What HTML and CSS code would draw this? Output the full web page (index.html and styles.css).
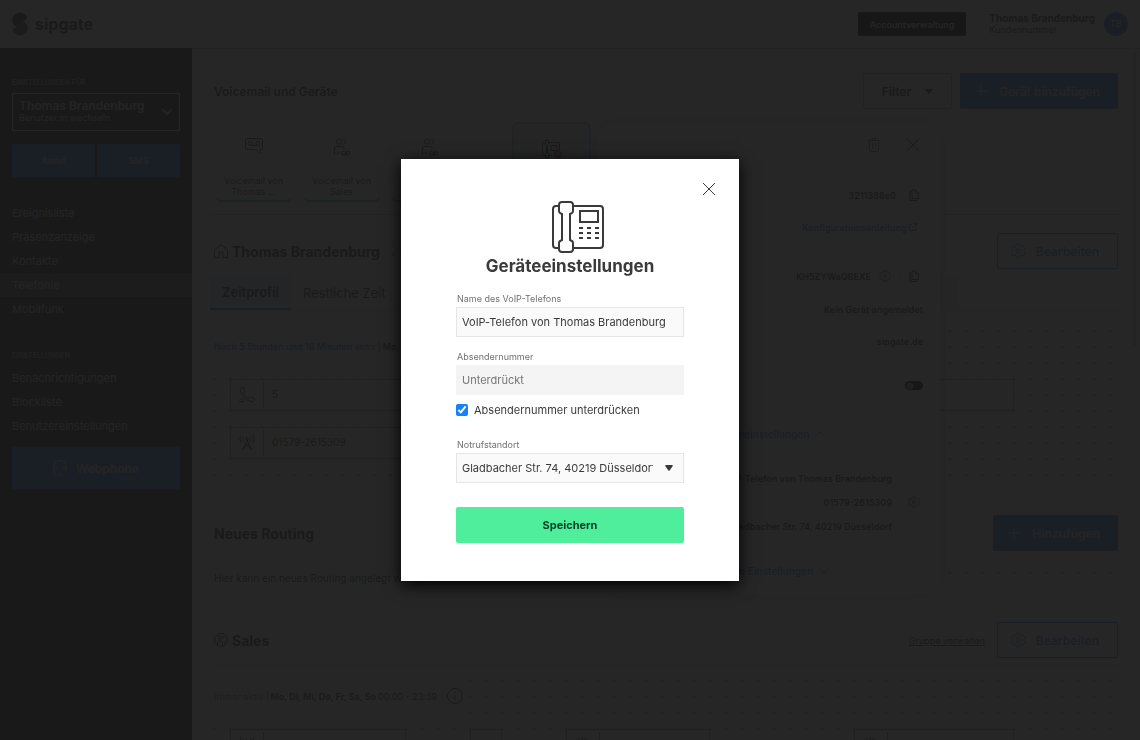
FILE: index.html
```
<!DOCTYPE html>
<html lang="de">
  <head>
    <title>Telefonie</title>
    <meta charset="utf-8" />
    <meta name="viewport" content="width=device-width, initial-scale=1" />
    <link rel="stylesheet" href="styles.css">
  </head>
  <body>
    <svg class="sprite" width="0" height="0" aria-hidden="true">
      <symbol id="gear" viewBox="0 0 16 16"><path d="M6.5 1h3l.5 2 1.5.9 2-.6 1.5 2.6L13.600 7.300v1.400L15 10.100l-1.500 2.600-2-.6L10 13l-.5 2h-3L6 13l-1.500-.9-2 .6L1 10.100l1.400-1.400V7.300L1 5.900l1.500-2.600 2 .6L6 3z"/><circle cx="8" cy="8" r="2"/></symbol>
      <symbol id="copy" viewBox="0 0 12 12"><path d="M2 2.500v9h7v-2M2 2.500h1M4 1h3.500L10.500 4v5.500H4zM7.500 1v3h3"/></symbol>
      <symbol id="cross" viewBox="0 0 12 12"><path d="M0 0l12 12M12 0L0 12"/></symbol>
      <symbol id="plus" viewBox="0 0 12 12"><path d="M6 0v12M0 6h12"/></symbol>
      <symbol id="people" viewBox="0 0 16 18"><circle cx="5" cy="3.500" r="2.700"/><path d="M9 1c3.500 0 3.500 5 0 5M.5 17v-6.500q0-2 2-2h6q1.500 0 1.500 2M4 17v-4"/><circle cx="9.500" cy="15" r="1.800"/><circle cx="14" cy="15" r="1.800"/><path d="M9.500 16.800H14"/></symbol>
      <symbol id="tower" viewBox="0 0 16 16"><circle cx="8" cy="4" r="1.300"/><path d="M8 5L3.500 15M8 5l4.500 10M5.500 11h5M6.500 8l5.500 6M9.500 8L4 14M4.500 1.500q-1.500 2.500 0 5M2 .5q-2.500 3.500 0 7M11.500 1.500q1.500 2.500 0 5M14 .5q2.500 3.500 0 7"/></symbol>
    </svg>

    <header class="topbar">
      <a class="logo" href="#">
        <svg width="16" height="24" viewBox="0 0 16 24"><path d="M5 14.500Q0 13 0 8a8 8 0 0 1 15.500-2z"/><path d="M11 9.500Q16 11 16 16a8 8 0 0 1-15.500 2z" opacity=".85"/></svg>
        sipgate
      </a>
      <button class="account-btn">Accountverwaltung</button>
      <div class="customer">
        <strong>Thomas Brandenburg</strong>
        <span>Kundennummer:</span>
        <i class="redacted"></i>
      </div>
      <span class="avatar">TB</span>
    </header>

    <div class="page">
      <nav class="sidebar">
        <p class="caption">EINSTELLUNGEN FÜR</p>
        <button class="user-switch">
          <span><strong>Thomas Brandenburg</strong><small>Benutzer:in wechseln</small></span>
          <svg width="10" height="6" viewBox="0 0 10 6"><path d="M.5.5L5 5 9.500.5"/></svg>
        </button>
        <div class="actions">
          <button>Anruf</button>
          <button>SMS</button>
        </div>
        <ul class="menu">
          <li><a href="#">Ereignisliste</a></li>
          <li><a href="#">Präsenzanzeige</a></li>
          <li><a href="#">Kontakte</a></li>
          <li><a class="active" href="#">Telefonie</a></li>
          <li><a href="#">Mobilfunk</a></li>
        </ul>
        <p class="caption second">EINSTELLUNGEN</p>
        <ul class="menu">
          <li><a href="#">Benachrichtigungen</a></li>
          <li><a href="#">Blockliste</a></li>
          <li><a href="#">Benutzereinstellungen</a></li>
        </ul>
        <button class="webphone">
          <svg width="14" height="16" viewBox="0 0 14 16"><path d="M1 9V6.500a6 6 0 0 1 12 0V9M1 7H.5v4H3V7zM13 7h.5v4H11V7zM1 11v2q0 2 2 2h3M6 14h3v1.500H6z"/></svg>
          Webphone
        </button>
      </nav>

      <main class="content">
        <div class="head">
          <h1>Voicemail und Geräte</h1>
          <button class="btn filter">Filter <svg width="8" height="5" viewBox="0 0 8 5"><path d="M0 0h8L4 5z"/></svg></button>
          <button class="btn primary"><svg width="12" height="12"><use href="#plus"/></svg>Gerät hinzufügen</button>
        </div>

        <div class="devices">
          <div class="device">
            <svg width="18" height="16" viewBox="0 0 18 16"><path d="M1.500.5h15q1 0 1 1v9q0 1-1 1H15v4l-4.500-4h-9q-1 0-1-1v-9q0-1 1-1z"/><circle cx="5" cy="5.500" r="2"/><circle cx="13" cy="5.500" r="2"/><path d="M5 7.500h8"/></svg>
            <p>Voicemail von Thomas ...</p>
          </div>
          <div class="device">
            <svg width="16" height="18"><use href="#people"/></svg>
            <p>Voicemail von Sales</p>
          </div>
          <div class="device">
            <svg width="16" height="18"><use href="#people"/></svg>
          </div>
          <div class="device selected">
            <svg width="20" height="18" viewBox="0 0 20 18"><path d="M3.500.5h3v4l-1 1v7l1 1v4h-3v-4l1-1v-7l-1-1zM3.500 2.500H2l-1.500 1v11l1.500 1h1.500M6.500 2.500h11v8M6.500 15.500H10M9 5.500h6v5H9z"/><circle class="offline" cx="15.500" cy="14" r="4"/><path class="offline-x" d="M14 12.500l3 3M17 12.500l-3 3"/></svg>
          </div>
        </div>

        <section class="routing">
          <div class="head">
            <svg class="head-icon" width="14" height="14" viewBox="0 0 14 14"><path d="M.5 6L7 .5 13.500 6v7.500H9V9q0-1-1-1H6Q5 8 5 9v4.500H.5z"/></svg>
            <h2>Thomas Brandenburg</h2>
            <svg class="pencil" width="10" height="10" viewBox="0 0 10 10"><path d="M.5 9.500l1-3L7 1l2 2-5.500 5.500z"/></svg>
            <button class="btn outline"><svg width="16" height="16"><use href="#gear"/></svg>Bearbeiten</button>
          </div>
          <div class="tabs">
            <button class="tab current">Zeitprofil</button>
            <button class="tab">Restliche Zeit</button>
          </div>
          <div class="canvas">
            <p class="status"><a href="#">Noch 5 Stunden und 18 Minuten aktiv</a> | <b>Mo, Di, Mi, Do, Fr</b></p>
            <div class="nodes">
              <div class="node wide"><svg width="16" height="16" viewBox="0 0 16 16"><path d="M2.500.5h2L6 4 4.500 6q1.500 4 5.500 5.500l1.500-1.500 4 1.500v2l-1.500 1.500Q3 13 1.500 3zM1 12h3M0 14.500h5"/></svg><span>5</span></div>
              <div class="node last"></div>
            </div>
            <div class="nodes">
              <div class="node wide"><svg width="16" height="16"><use href="#tower"/></svg><span>01579-2615309</span></div>
            </div>
          </div>
        </section>

        <section class="routing new">
          <div class="head">
            <h2>Neues Routing</h2>
            <button class="btn primary"><svg width="12" height="12"><use href="#plus"/></svg>Hinzufügen</button>
          </div>
          <div class="canvas">
            <p class="status">Hier kann ein neues Routing angelegt werden.</p>
          </div>
        </section>

        <section class="routing group">
          <div class="head">
            <svg class="head-icon" width="14" height="14" viewBox="0 0 14 14"><circle cx="7" cy="7" r="6.500"/><circle cx="6" cy="4.500" r="1.600"/><path d="M9 3q1.500 1.500 0 3M3.500 12V9q0-1 1-1h3q1 0 1 1v4M10 8q1 0 1 1.500V12"/></svg>
            <h2>Sales</h2>
            <a class="manage" href="#">Gruppe verwalten</a>
            <button class="btn outline"><svg width="16" height="16"><use href="#gear"/></svg>Bearbeiten</button>
          </div>
          <div class="canvas">
            <p class="status"><a class="plain" href="#">Immer aktiv</a> | <b>Mo, Di, Mi, Do, Fr, Sa, So</b> 00:00 - 23:59
              <svg class="info" width="16" height="16" viewBox="0 0 16 16"><circle cx="8" cy="8" r="7.500"/><path d="M8 6.500V12M8 4v1"/></svg></p>
            <div class="nodes">
              <div class="node wide"><svg width="16" height="16"><use href="#tower"/></svg><span></span></div>
              <div class="node small"></div>
              <div class="node middle"><svg width="16" height="16"><use href="#people"/></svg><span></span></div>
              <div class="node last"><svg width="16" height="16"><use href="#people"/></svg><span></span></div>
            </div>
          </div>
        </section>

        <aside class="details">
          <div class="row tools">
            <svg class="trash" width="12" height="14" viewBox="0 0 12 14"><path d="M0 2.500h12M4 2.500v-2h4v2M1.500 2.500v10q0 1 1 1h7q1 0 1-1v-10M4.500 5v6M7.500 5v6"/></svg>
            <svg width="12" height="12"><use href="#cross"/></svg>
          </div>
          <div class="row id">3211388e0 <svg width="12" height="12"><use href="#copy"/></svg></div>
          <div class="row"><a href="#">Konfigurationsanleitung <svg width="8" height="8" viewBox="0 0 8 8"><path d="M3 1.500H.5v6h6V5M4.500.5h3v3M7.500.5L3 5"/></svg></a></div>
          <div class="row secret">KH5ZYWaQBEXE <svg width="12" height="12"><use href="#gear"/></svg><i></i><svg width="12" height="12"><use href="#copy"/></svg></div>
          <div class="row">Kein Gerät angemeldet</div>
          <div class="row">sipgate.de</div>
          <div class="row switch"><input type="checkbox" aria-label="Aktiv" /></div>
          <div class="row fold"><a href="#">Geräteeinstellungen</a> <svg width="10" height="6" viewBox="0 0 10 6"><path d="M.5 5L5 1l4.500 4"/></svg></div>
          <div class="row inset">VoIP-Telefon von Thomas Brandenburg</div>
          <div class="row inset">01579-2615309 <svg width="12" height="12"><use href="#gear"/></svg></div>
          <div class="row inset">Gladbacher Str. 74, 40219 Düsseldorf</div>
          <div class="row fold"><a href="#">Weitere Einstellungen</a> <svg width="10" height="6" viewBox="0 0 10 6"><path d="M.5 1L5 5l4.500-4"/></svg></div>
        </aside>
        <span class="scroll-thumb"></span>
      </main>
    </div>

    <div class="overlay">
      <form class="modal" role="dialog" aria-labelledby="modal-title">
        <button class="close" type="button" aria-label="Schließen"><svg width="12" height="12"><use href="#cross"/></svg></button>
        <svg class="phone" width="68" height="52" viewBox="-16 0 68 52">
          <path d="M7 5H4Q1 5 1 8v36q0 3 3 3h3M21 5h27q3 0 3 3v36q0 3-3 3H21"/>
          <path d="M10 1h8q3 0 3 3v6q0 2-3 3v26q3 1 3 3v6q0 3-3 3h-8q-3 0-3-3v-6q0-2 3-3V13q-3-1-3-3V4q0-3 3-3z"/>
          <rect x="28" y="10" width="18" height="11"/>
          <path class="keys" d="M27 27h20M27 32h20M27 37h20"/>
        </svg>
        <h2 id="modal-title">Geräteeinstellungen</h2>
        <div class="field">
          <label for="name">Name des VoIP-Telefons</label>
          <input id="name" type="text" value="VoIP-Telefon von Thomas Brandenburg" />
        </div>
        <div class="field">
          <label for="number">Absendernummer</label>
          <input id="number" type="text" value="Unterdrückt" disabled />
        </div>
        <div class="check">
          <input id="hide" type="checkbox" checked />
          <label for="hide">Absendernummer unterdrücken</label>
        </div>
        <div class="field">
          <label for="place">Notrufstandort</label>
          <div class="select">
            <select id="place"><option>Gladbacher Str. 74, 40219 Düsseldorf</option></select>
            <svg width="8" height="6" viewBox="0 0 8 6"><path d="M1 0h6q1.500 0 .6 1.200L4.600 5.500q-.6.800-1.200 0L.4 1.200Q-.5 0 1 0z"/></svg>
          </div>
        </div>
        <button class="save" type="submit">Speichern</button>
      </form>
    </div>
  </body>
</html>
```
FILE: styles.css
```
* {
  box-sizing: border-box;
}
body {
  --ink: #333;
  --blue: #3d88e8;
  margin: 0;
  height: 100vh;
  display: flex;
  flex-direction: column;
  overflow: hidden;
  background: #fff;
  color: var(--ink);
  font-family: Inter, "Liberation Sans", sans-serif;
  font-size: 11px;
}
h1, h2, p, ul {
  margin: 0;
  padding: 0;
}
ul {
  list-style: none;
}
a {
  color: inherit;
  text-decoration: none;
}
button, input, select {
  font: inherit;
  color: inherit;
}
button {
  border: 0;
  padding: 0;
  background: none;
}
svg {
  flex: none;
  fill: none;
  stroke: currentColor;
}
.sprite {
  position: absolute;
}

/* Kopfzeile */
.topbar {
  flex: none;
  display: flex;
  align-items: center;
  height: 49px;
  padding: 0 12px;
  border-bottom: 1px solid #ccc;
}
.logo {
  display: flex;
  align-items: center;
  gap: 7px;
  margin-right: auto;
  font-size: 16px;
  font-weight: 700;
}
.logo svg {
  fill: var(--ink);
  stroke: none;
}
.account-btn {
  height: 24px;
  padding: 0 12px;
  border-radius: 2px;
  background: #000;
  color: #fff;
  font-size: 9px;
  font-weight: 500;
}
.customer {
  position: relative;
  margin: 0 9px 0 23px;
  line-height: 12px;
}
.customer strong, .customer span {
  display: block;
}
.customer strong {
  font-size: 10px;
}
.customer span {
  font-size: 9px;
}
.redacted {
  position: absolute;
  right: 0;
  bottom: -8px;
  width: 38px;
  height: 20px;
  background: #fff;
}
.avatar {
  width: 24px;
  height: 24px;
  border-radius: 50%;
  background: var(--blue);
  color: #fff;
  font-size: 9px;
  line-height: 24px;
  text-align: center;
}

/* Seitenleiste */
.page {
  flex: 1;
  display: flex;
  min-height: 0;
}
.sidebar {
  flex: none;
  width: 192px;
  margin-top: -1px;
  padding: 29px 12px 0;
  background: #2b2b2b;
  color: #ddd;
}
.caption {
  color: #aaa;
  font-size: 7px;
  line-height: 12px;
  font-weight: 600;
}
.caption.second {
  margin: 29px 0 4px;
}
.user-switch {
  display: flex;
  align-items: center;
  justify-content: space-between;
  width: 100%;
  height: 38px;
  margin-top: 4px;
  padding: 0 7px 0 6px;
  border: 1px solid #fff;
  text-align: left;
}
.user-switch strong, .user-switch small {
  display: block;
  line-height: 12px;
}
.user-switch strong {
  font-size: 12px;
  font-weight: 600;
}
.user-switch small {
  font-size: 9px;
}
.user-switch svg {
  stroke-width: 2;
}
.actions {
  display: flex;
  gap: 2px;
  margin: 13px 0 24px;
}
.actions button {
  flex: 1;
  height: 33px;
  border-radius: 2px;
  background: var(--blue);
  font-size: 9px;
  font-weight: 600;
}
.menu a {
  display: block;
  margin: 0 -12px;
  padding: 0 12px;
  font-size: 11px;
  line-height: 24px;
}
.menu .active {
  background: #555;
}
.webphone {
  display: flex;
  align-items: center;
  justify-content: center;
  gap: 9px;
  width: 100%;
  height: 42px;
  margin-top: 9px;
  border-radius: 2px;
  background: var(--blue);
  font-size: 12px;
  font-weight: 600;
}

/* Inhalt */
.content {
  position: relative;
  flex: 1;
  min-width: 0;
  padding: 24px 22px 0;
  overflow: hidden;
}
.head {
  display: flex;
  align-items: center;
  height: 36px;
}
h1 {
  margin-right: auto;
  font-size: 12px;
  font-weight: 600;
}
.head h2 {
  font-size: 14px;
}
.head-icon {
  margin-right: 4px;
}
.pencil {
  margin-left: 12px;
  color: var(--blue);
}
.btn {
  display: flex;
  align-items: center;
  height: 36px;
  border-radius: 2px;
  font-size: 12px;
  font-weight: 600;
}
.primary {
  gap: 12px;
  padding: 0 18px 0 15px;
  background: var(--blue);
  color: #ddd;
}
.outline {
  gap: 10px;
  padding: 0 18px 0 12px;
  border: 1px solid var(--blue);
  color: var(--blue);
}
.routing .btn {
  margin-left: auto;
}
.filter {
  gap: 14px;
  margin-right: 8px;
  padding: 0 18px;
  border: 1px solid #bbb;
}
.filter svg {
  fill: currentColor;
  stroke: none;
}
.devices {
  display: flex;
  gap: 11px;
  margin: 0 -4px;
  padding: 13px 5px 12px;
  border-bottom: 1px solid #ccc;
}
.device {
  display: flex;
  flex-direction: column;
  align-items: center;
  justify-content: space-between;
  width: 77px;
  height: 80px;
  padding: 16px 6px 3px;
  border-bottom: 2px solid #59b399;
  border-radius: 6px;
  font-size: 9px;
  line-height: 11px;
  text-align: center;
}
.selected {
  width: 79px;
  margin-left: 33px;
  border: 2px solid #9ac5ff;
  background: #e6edff;
}
.offline {
  fill: #b85566;
  stroke: none;
}
.offline-x {
  stroke: #fff;
}
.routing .head {
  margin-top: 18px;
}
.tabs {
  display: flex;
  height: 36px;
  margin: 6px -4px 0;
  border-bottom: 1px solid #ddd;
  background: #f2f2f2;
}
.tab {
  padding: 0 12px;
  font-size: 13px;
}
.current {
  border-bottom: 2px solid var(--blue);
  background: #dde6ff;
  font-weight: 600;
}
.canvas {
  margin: 12px 0 0 -8px;
  padding-bottom: 16px;
  background-image: radial-gradient(circle, #aaa 1px, transparent 1px);
  background-size: 16px 16px;
}
.status {
  display: flex;
  align-items: center;
  gap: 2px;
  width: fit-content;
  height: 48px;
  padding: 0 4px 2px 8px;
  background: #fff;
  font-size: 9px;
}
.status a {
  color: var(--blue);
  font-weight: 600;
}
.status b {
  font-weight: 600;
}
.status .plain {
  font-weight: 400;
}
.info {
  margin-left: 8px;
}
.nodes {
  display: flex;
  margin-left: 24px;
  padding: 8px 0;
}
.node {
  display: flex;
  align-items: center;
  height: 32px;
  border: 1px solid #999;
  border-radius: 2px;
  background: #fff;
}
.node svg {
  margin: 0 8px;
}
.node span {
  height: 26px;
  padding-left: 8px;
  border-left: 1px solid #999;
  font-size: 10px;
  line-height: 24px;
}
.wide {
  width: 176px;
}
.small {
  width: 32px;
  margin-left: 64px;
}
.middle {
  width: 144px;
  margin-left: 64px;
}
.last {
  width: 160px;
  margin-left: 144px;
}
.wide + .last {
  margin-left: 448px;
}
.new .head {
  margin-top: 32px;
}
.new .canvas {
  margin-top: 14px;
  padding: 0;
  background-repeat: repeat-x;
}
.new .status {
  height: 26px;
  padding-bottom: 0;
  font-size: 10px;
}
.group .head {
  height: 44px;
  margin: 31px -4px 0;
  padding: 0 4px 7px;
  border-bottom: 1px solid #ddd;
}
.group .canvas {
  margin-top: 7px;
}
.manage {
  margin-left: auto;
  font-size: 9px;
  text-decoration: underline;
}
.manage + .btn {
  margin-left: 12px;
}

/* Gerätedetails */
.details {
  position: absolute;
  top: 73px;
  right: 200px;
  width: 343px;
  padding: 15px 17px 7px;
  border-radius: 16px;
  background: #fff;
  box-shadow: 0 0 24px rgba(0, 0, 0, 0.2);
  font-size: 9px;
  font-weight: 600;
}
.row {
  display: flex;
  align-items: center;
  justify-content: flex-end;
  height: 32px;
}
.row a {
  color: var(--blue);
}
.tools {
  gap: 27px;
  height: 16px;
  padding-right: 4px;
}
.trash {
  color: #b66;
}
.id {
  gap: 12px;
  margin-top: 26px;
  padding-right: 3px;
}
.id + .row {
  padding-right: 6px;
}
.secret {
  gap: 8px;
  margin: 17px 0 1px;
  padding-right: 3px;
}
.secret i {
  height: 20px;
  border-left: 1px solid #ccc;
}
.switch {
  margin: 12px 0 17px;
}
.switch input {
  appearance: none;
  width: 18px;
  height: 9px;
  margin: 0;
  border-radius: 5px;
  background: radial-gradient(circle at 5px 5px, #999 3px, #000 4px);
}
.fold {
  justify-content: center;
  gap: 6px;
  margin: 17px 0 16px;
  color: var(--blue);
  font-size: 10px;
}
.switch + .fold {
  margin-top: 0;
}
.fold:last-child {
  margin-bottom: 0;
}
.inset {
  position: relative;
  height: 24px;
  padding-right: 31px;
}
.inset svg {
  position: absolute;
  right: 3px;
}
.scroll-thumb {
  position: absolute;
  top: 3px;
  right: 4px;
  width: 3px;
  height: 294px;
  border-radius: 2px;
  background: #ccc;
}

/* Dialog */
.overlay {
  position: fixed;
  inset: 0;
  display: flex;
  align-items: center;
  justify-content: center;
  background: rgba(24, 24, 24, 0.94);
}
.modal {
  position: relative;
  width: 338px;
  padding: 42px 55px 38px;
  background: #fff;
  box-shadow: 0 4px 16px #000;
  color: #3a3a3a;
}
.close {
  position: absolute;
  top: 24px;
  right: 24px;
  width: 12px;
  height: 12px;
}
.close svg, .phone {
  display: block;
}
.phone {
  margin: 0 auto;
  stroke-width: 2;
}
.phone .keys {
  stroke-dasharray: 4;
}
.modal h2 {
  margin: 0 -20px 14px;
  font-size: 17px;
  line-height: 26px;
  text-align: center;
}
.field {
  margin-bottom: 14px;
}
.field label {
  display: block;
  margin: 0 1px 2px;
  color: #707070;
  font-size: 9px;
  line-height: 12px;
}
.field input, .field select {
  display: block;
  width: 100%;
  height: 30px;
  padding: 0 5px;
  border: 1px solid #e6e6e6;
  border-radius: 0;
  background: #fafafa;
  color: #3a3a3a;
  font-size: 11px;
}
.field input:disabled {
  border-color: #f4f4f4;
  background: #f4f4f4;
  color: #777;
}
.check {
  display: flex;
  align-items: center;
  gap: 6px;
  height: 12px;
  margin: -5px 0 23px;
}
.check input {
  width: 12px;
  height: 12px;
  margin: 0;
  accent-color: #1482fa;
}
.select {
  position: relative;
}
.field select {
  appearance: none;
  padding-right: 30px;
}
.select svg {
  position: absolute;
  top: 12px;
  right: 11px;
  fill: #3a3a3a;
  stroke: none;
}
.save {
  display: block;
  width: 100%;
  height: 36px;
  margin-top: 24px;
  border-radius: 2px;
  background: #4eee9d;
  color: #004225;
  font-size: 11px;
  font-weight: 700;
}
```
